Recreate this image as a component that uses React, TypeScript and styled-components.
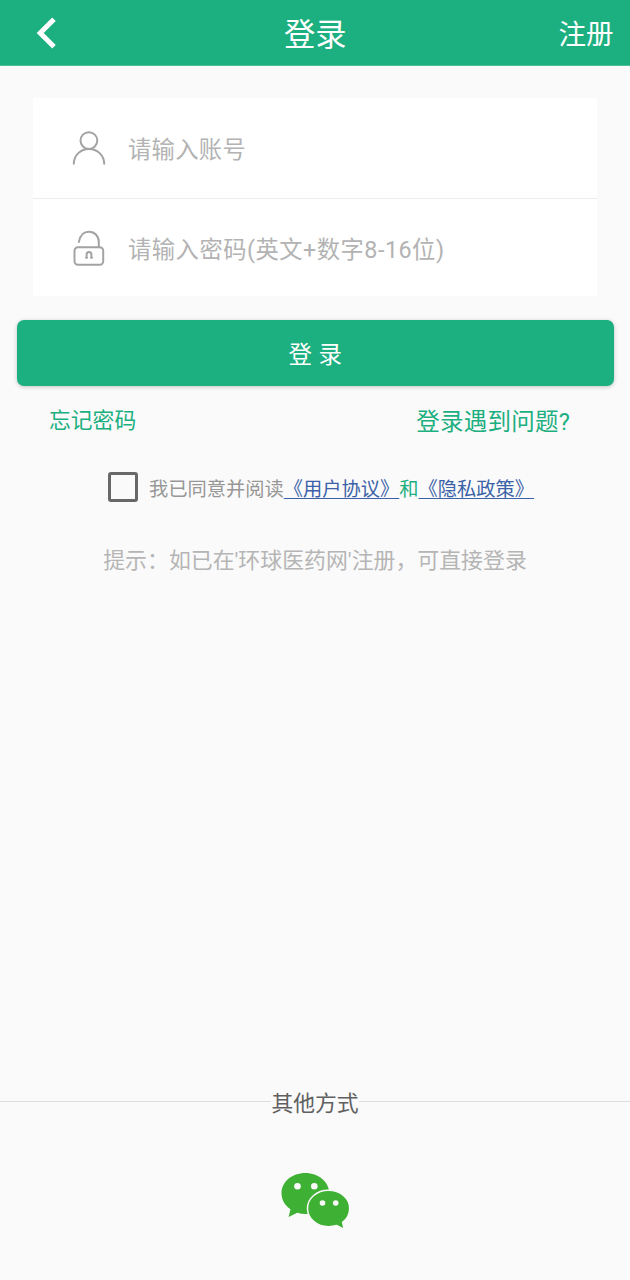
import React from 'react';
import styled, { createGlobalStyle } from 'styled-components';

const GREEN = '#1caf80';

const GlobalStyle = createGlobalStyle`
  * { box-sizing: border-box; }
  body {
    margin: 0;
    background: #fafafa;
    font-family: Roboto, "Noto Sans CJK SC", sans-serif;
  }
  button, input { font-family: inherit; }
`;

const Page = styled.div`
  display: flex;
  flex-direction: column;
  width: 100%;
  height: 1280px;
  background: #fafafa;
`;

const Header = styled.header`
  display: grid;
  grid-template-columns: 1fr auto 1fr;
  align-items: center;
  height: 66px;
  padding: 0 16.5px 0 36px;
  background: ${GREEN};
  border-bottom: 1px solid #4dc09b;
  color: #fff;
`;

const BackButton = styled.button`
  display: flex;
  justify-self: start;
  padding: 1px 0 0;
  border: 0;
  background: none;
`;

const Title = styled.h1`
  margin: 6px 19px 0 0;
  font-size: 31.3px;
  line-height: 40px;
  font-weight: 400;
`;

const RegisterLink = styled.a`
  justify-self: end;
  margin-top: 5px;
  font-size: 27.5px;
  line-height: 36px;
`;

const Fields = styled.div`
  margin: 32px 33px 0;
  background: #fff;
`;

const Field = styled.label<{ $height: number; $divided?: boolean }>`
  display: flex;
  align-items: center;
  gap: 20px;
  height: ${p => p.$height}px;
  padding-left: 37px;
  border-bottom: ${p => (p.$divided ? '1px solid #ececec' : '0')};
`;

const FieldInput = styled.input<{ $tracking?: number }>`
  flex: 1;
  min-width: 0;
  height: 40px;
  padding: 4px 0 0;
  border: 0;
  outline: 0;
  background: transparent;
  font-size: 23.3px;
  letter-spacing: ${p => p.$tracking ?? 0.3}px;
  color: #333;
  &::placeholder { color: #b3b3b3; opacity: 1; }
`;

const SubmitButton = styled.button`
  height: 66px;
  margin: 24px 16px 0 16.5px;
  padding: 4px 0 0;
  border: 0;
  border-radius: 7px;
  background: ${GREEN};
  box-shadow: 0 1px 4px rgba(0, 0, 0, 0.22);
  color: #fff;
  font-size: 23.5px;
  line-height: 32px;
  word-spacing: 0.6px;
`;

const HelpRow = styled.div`
  display: flex;
  justify-content: space-between;
  align-items: center;
  height: 40px;
  margin: 15px 60px 0 49px;
`;

const HelpLink = styled.a<{ $size: number; $drop?: number; $tracking?: number }>`
  padding-top: ${p => p.$drop ?? 0}px;
  font-size: ${p => p.$size}px;
  letter-spacing: ${p => p.$tracking ?? 0}px;
  line-height: 32px;
  color: ${GREEN};
`;

const Agreement = styled.div`
  display: flex;
  align-items: center;
  height: 32px;
  margin: 30px 0 0 107.5px;
  font-size: 19.25px;
  line-height: 28px;
  color: #979797;
`;

const Checkbox = styled.span`
  width: 30px;
  height: 30px;
  margin-right: 11.5px;
  border: 3px solid #686868;
  border-radius: 3px;
`;

const AgreementText = styled.span`
  padding-top: 5px;
  white-space: nowrap;
`;

const PolicyLink = styled.a`
  color: #3b62a8;
  text-decoration: underline;
  text-decoration-thickness: 1px;
  text-underline-offset: 2px;
`;

const Joiner = styled.span`
  color: ${GREEN};
`;

const Hint = styled.p`
  margin: 42px 0 0;
  font-size: 21.9px;
  line-height: 32px;
  text-align: center;
  color: #b5b5b5;
`;

const OtherMethods = styled.section`
  display: flex;
  flex-direction: column;
  align-items: center;
  margin-top: auto;
  height: 192px;
`;

const Separator = styled.div`
  display: flex;
  align-items: center;
  width: 100%;
  height: 32px;
  font-size: 21.8px;
  line-height: 32px;
  color: #606060;
  &::before, &::after {
    content: "";
    flex: 1;
    height: 1px;
    margin-bottom: 5px;
    background: #dedede;
  }
`;

const WechatButton = styled.button`
  display: flex;
  margin-top: 52px;
  padding: 0;
  border: 0;
  background: none;
`;

const BackIcon = () => (
  <svg width="21" height="34" viewBox="0 0 21 34" fill="none">
    <path d="M18 3.2 4.200 17 18 30.800" stroke="#fff" strokeWidth="5" />
  </svg>
);

const UserIcon = () => (
  <svg width="38" height="38" viewBox="0 0 38 38" fill="none" stroke="#a3a3a3" strokeWidth="2" strokeLinecap="round">
    <circle cx="18.900" cy="11.600" r="8.400" />
    <path d="M3.800 34.700C4 26.100 10.600 20 19 20S34 26.100 34.200 34.700" />
  </svg>
);

const LockIcon = () => (
  <svg width="38" height="38" viewBox="0 0 38 38" fill="none" stroke="#a3a3a3" strokeWidth="2" strokeLinecap="round">
    <rect x="4.500" y="18.300" width="28.700" height="17.500" rx="3.500" />
    <path d="M8.900 12.900C10 6.500 13.800 2.800 19 2.800c5.700 0 9.800 4.400 9.800 10V18.300" />
    <path d="M16.600 28.800v-3c0-3.600 4.800-3.600 4.800 0v3M16 28.800h1M21 28.800h1" />
  </svg>
);

const WechatIcon = () => (
  <svg width="70" height="58" viewBox="0 0 70 58">
    <path
      d="M25.300 1C12 1 1.500 9.900 1.500 21.300c0 6.600 3.400 12.200 9 16L8.600 44.900l8.700-4.100c2.700.8 5.300 1.200 8.200 1.200C38.600 42 49.300 32.800 49.300 21.400S38.600 1 25.300 1Z"
      fill="#3eb034"
    />
    <path
      d="M48.500 18.200c11.700 0 21.200 7.900 21.200 18.200 0 5.700-2.800 10.700-7.100 13.900l1.700 7.200-7.500-4c-2.500.8-5.400 1.200-8.300 1.200-11.700 0-21-8.200-21-18.300s9.300-18.200 21-18.200Z"
      fill="#3eb034"
      stroke="#fafafa"
      strokeWidth="1.500"
    />
    <g fill="#fafafa">
      <circle cx="17.500" cy="14.300" r="3.300" />
      <circle cx="34.300" cy="14.300" r="3.300" />
      <circle cx="42.500" cy="31" r="2.800" />
      <circle cx="55.700" cy="31" r="2.800" />
    </g>
  </svg>
);

export default function App() {
  return (
    <Page>
      <GlobalStyle />
      <Header>
        <BackButton aria-label="返回"><BackIcon /></BackButton>
        <Title>登录</Title>
        <RegisterLink>注册</RegisterLink>
      </Header>
      <Fields>
        <Field $height={101} $divided>
          <UserIcon />
          <FieldInput type="text" placeholder="请输入账号" />
        </Field>
        <Field $height={97}>
          <LockIcon />
          <FieldInput type="password" $tracking={0.5} placeholder="请输入密码(英文+数字8-16位)" />
        </Field>
      </Fields>
      <SubmitButton>登 录</SubmitButton>
      <HelpRow>
        <HelpLink $size={21.8}>忘记密码</HelpLink>
        <HelpLink $size={23.5} $drop={1} $tracking={0.25}>登录遇到问题?</HelpLink>
      </HelpRow>
      <Agreement>
        <Checkbox role="checkbox" aria-checked="false" />
        <AgreementText>
          我已同意并阅读<PolicyLink>《用户协议》</PolicyLink><Joiner>和</Joiner><PolicyLink>《隐私政策》</PolicyLink>
        </AgreementText>
      </Agreement>
      <Hint>提示：如已在'环球医药网'注册，可直接登录</Hint>
      <OtherMethods>
        <Separator>其他方式</Separator>
        <WechatButton aria-label="微信登录"><WechatIcon /></WechatButton>
      </OtherMethods>
    </Page>
  );
}
